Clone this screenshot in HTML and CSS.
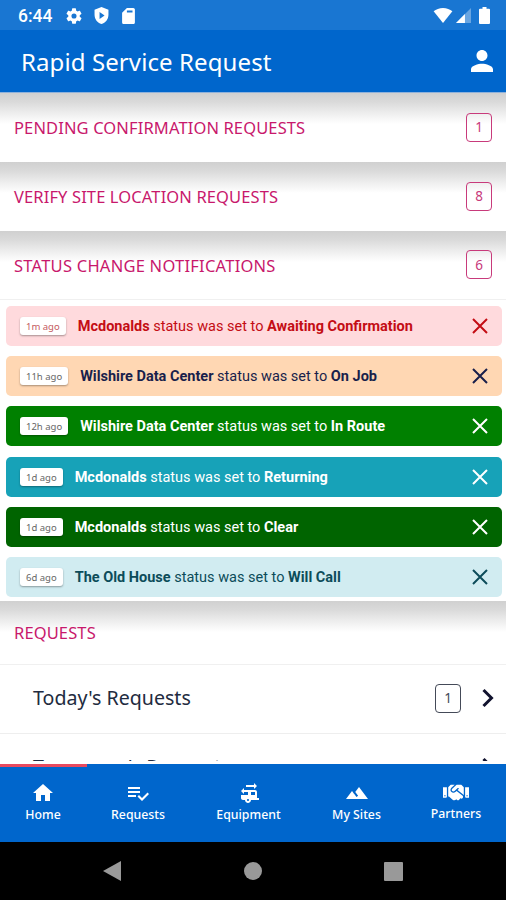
FILE: index.html
```html
<!DOCTYPE html>
<html lang="en">
<head>
<meta charset="utf-8">
<title>Rapid Service Request</title>
<link rel="stylesheet" href="styles.css">
</head>
<body>
<div class="phone">
  <div class="status">
    <span class="clock">6:44</span>
    <svg class="gear" viewBox="2 2 20 20"><path d="M19.14 12.94c.04-.3.06-.61.06-.94s-.02-.64-.07-.94l2.03-1.58a.49.49 0 0 0 .12-.61l-1.92-3.32a.49.49 0 0 0-.59-.22l-2.39.96a7 7 0 0 0-1.62-.94l-.36-2.54a.48.48 0 0 0-.48-.41h-3.84a.48.48 0 0 0-.47.41l-.36 2.54a7 7 0 0 0-1.62.94l-2.39-.96a.48.48 0 0 0-.59.22L2.74 8.87a.48.48 0 0 0 .12.61l2.03 1.58a6 6 0 0 0 0 1.88l-2.03 1.58a.49.49 0 0 0-.12.61l1.92 3.32c.12.22.37.29.59.22l2.39-.96c.5.38 1.03.7 1.62.94l.36 2.54c.05.24.24.41.48.41h3.84c.24 0 .44-.17.47-.41l.36-2.54a7 7 0 0 0 1.62-.94l2.39.96c.22.08.47 0 .59-.22l1.92-3.32a.48.48 0 0 0-.12-.61zM12 15.2a3.200 3.200 0 1 1 0-6.400 3.200 3.200 0 0 1 0 6.400z"/></svg>
    <svg class="shield" viewBox="3 1 18 22"><path fill-rule="evenodd" d="M12 1 3 4.500V11c0 5.600 3.800 10.700 9 12 5.200-1.300 9-6.400 9-12V4.500zM9.500 7.500v9l6.500-4.500z"/></svg>
    <svg class="card" viewBox="4 2 16 20"><path fill-rule="evenodd" d="M18 2h-8L4 8v12c0 1.100.900 2 2 2h12c1.100 0 2-.900 2-2V4c0-1.100-.900-2-2-2zM10 5h7v2.500h-7z"/></svg>
    <svg class="wifi" viewBox="0 0 20 16"><path d="M10 16 0 3.500C2.500 1.500 6 0 10 0s7.500 1.500 10 3.500z"/></svg>
    <svg class="signal" viewBox="0 0 16 16"><path opacity=".35" d="M0 16 16 0v16z"/><path d="M0 16 9.500 6.500V16z"/></svg>
    <svg class="battery" viewBox="0 0 11 17"><path d="M3.500 0h4v1.700H10a1 1 0 0 1 1 1V16a1 1 0 0 1-1 1H1a1 1 0 0 1-1-1V2.700a1 1 0 0 1 1-1h2.500z"/></svg>
  </div>
  <header class="appbar">
    <h1><span>Rapid Service Request</span></h1>
    <svg class="person" viewBox="4 4 16 16"><path d="M12 12c2.210 0 4-1.790 4-4s-1.790-4-4-4-4 1.790-4 4 1.790 4 4 4zm0 2c-2.670 0-8 1.340-8 4v2h16v-2c0-2.660-5.330-4-8-4z"/></svg>
  </header>
  <main class="content">
    <section class="head"><h2>PENDING CONFIRMATION REQUESTS</h2><span class="count">1</span></section>
    <section class="head"><h2>VERIFY SITE LOCATION REQUESTS</h2><span class="count">8</span></section>
    <section class="head ruled"><h2 class="wide">STATUS CHANGE NOTIFICATIONS</h2><span class="count">6</span></section>
    <div class="alerts">
      <div class="alert danger"><span class="ago">1m ago</span><p><b>Mcdonalds</b> status was set to <b>Awaiting Confirmation</b></p><svg class="x" viewBox="0 0 16 16"><path d="m1 1 14 14M15 1 1 15"/></svg></div>
      <div class="alert peach"><span class="ago">11h ago</span><p><b>Wilshire Data Center</b> status was set to <b>On Job</b></p><svg class="x" viewBox="0 0 16 16"><path d="m1 1 14 14M15 1 1 15"/></svg></div>
      <div class="alert green"><span class="ago">12h ago</span><p><b>Wilshire Data Center</b> status was set to <b>In Route</b></p><svg class="x" viewBox="0 0 16 16"><path d="m1 1 14 14M15 1 1 15"/></svg></div>
      <div class="alert teal"><span class="ago">1d ago</span><p><b>Mcdonalds</b> status was set to <b>Returning</b></p><svg class="x" viewBox="0 0 16 16"><path d="m1 1 14 14M15 1 1 15"/></svg></div>
      <div class="alert forest"><span class="ago">1d ago</span><p><b>Mcdonalds</b> status was set to <b>Clear</b></p><svg class="x" viewBox="0 0 16 16"><path d="m1 1 14 14M15 1 1 15"/></svg></div>
      <div class="alert info"><span class="ago">6d ago</span><p><b>The Old House</b> status was set to <b>Will Call</b></p><svg class="x" viewBox="0 0 16 16"><path d="m1 1 14 14M15 1 1 15"/></svg></div>
    </div>
    <section class="head short ruled"><h2>REQUESTS</h2></section>
    <div class="row"><span class="label">Today's Requests</span><span class="count dark">1</span><svg class="chev" viewBox="0 0 12 20"><path d="m2 2 8 8-8 8"/></svg></div>
    <div class="row"><span class="label">Tomorrow's Requests</span><svg class="chev" viewBox="0 0 12 20"><path d="m2 2 8 8-8 8"/></svg></div>
  </main>
  <div class="indicator"><i></i></div>
  <nav class="tabs">
    <a class="w1"><svg viewBox="0 0 24 24"><path d="M10 20v-6h4v6h5v-8h3L12 3 2 12h3v8z"/></svg>Home</a>
    <a class="w2"><svg viewBox="0 0 24 24"><path d="M14 10H2v2h12v-2zm0-4H2v2h12V6zM2 16h8v-2H2v2zm19.500-4.500L23 13l-6.990 7-4.510-4.500L13 14l3.010 3 5.490-5.500z"/></svg>Requests</a>
    <a class="w3"><svg viewBox="0 0 24 24"><path d="M20 17v-6c0-1.100-.900-2-2-2H7V7l-3 3 3 3v-2h4v3H4v3c0 1.100.900 2 2 2h2c0 1.660 1.340 3 3 3s3-1.340 3-3h8v-2h-2zm-9 3c-.550 0-1-.450-1-1s.450-1 1-1 1 .450 1 1-.450 1-1 1zm7-6h-4v-3h4v3zM17 2v2H9v2h8v2l3-3-3-3z"/></svg>Equipment</a>
    <a class="w4"><svg viewBox="0 0 24 24"><path d="m14 6-3.750 5 2.850 3.800-1.600 1.200C9.810 13.750 7 10 7 10l-6 8h22L14 6z"/></svg>My Sites</a>
    <a class="w5"><svg viewBox="0 0 640 512"><path d="M434.700 64h-85.900c-8 0-15.700 3-21.600 8.400l-98.300 90c-.100.100-.200.300-.300.400-16.600 15.600-16.300 40.500-2.100 56 12.700 13.900 39.400 17.600 56.100 2.700.100-.100.300-.100.400-.200l79.900-73.200c6.500-5.900 16.700-5.500 22.600 1 6 6.500 5.500 16.600-1 22.600l-26.100 23.900L504 313.800c2.900 2.400 5.500 5 7.900 7.700V128l-54.600-54.600c-5.900-6-14.100-9.400-22.600-9.400zM544 128.200v223.900c0 17.700 14.300 32 32 32h64V128.200h-96zm48 223.900c-8.800 0-16-7.200-16-16s7.200-16 16-16 16 7.200 16 16-7.200 16-16 16zM0 384h64c17.700 0 32-14.300 32-32V128.200H0V384zm48-63.900c8.800 0 16 7.200 16 16s-7.200 16-16 16-16-7.200-16-16c0-8.900 7.200-16 16-16zm435.900 18.600L334.600 217.500l-30 27.500c-29.700 27.100-75.200 24.500-101.700-4.400-26.900-29.400-24.800-74.900 4.400-101.700L289.100 64h-83.800c-8.500 0-16.600 3.400-22.600 9.400L128 128v223.900h18.300l90.500 81.900c27.400 22.300 67.700 18.100 90-9.300l.200-.200 17.900 15.500c15.900 13 39.400 10.500 52.300-5.400l31.400-38.600 5.400 4.400c13.700 11.100 33.900 9.100 45-4.700l9.500-11.700c11.200-13.800 9.100-33.900-4.600-45.100z"/></svg>Partners</a>
  </nav>
  <div class="sysnav">
    <svg class="back" viewBox="0 0 18 20"><path d="M18 0v20L0 10z"/></svg>
    <svg class="home" viewBox="0 0 18 18"><circle cx="9" cy="9" r="9"/></svg>
    <svg class="recent" viewBox="0 0 19 19"><rect width="19" height="19" rx="1"/></svg>
  </div>
</div>
</body>
</html>
```
FILE: styles.css
```css
* { box-sizing: border-box; }
body { margin: 0; background: #000; font-family: "Noto Sans", sans-serif; }
h1, h2, p { margin: 0; font-weight: 400; }
svg { display: block; flex: none; fill: #fff; }
.phone { width: 506px; height: 900px; display: flex; flex-direction: column; overflow: hidden; background: #fff; }

.status { height: 30px; flex: none; display: flex; align-items: center; background: #1976d2; padding: 1px 16px 0 18px; color: #fff; }
.clock { width: 34px; font: 500 17.500px/20px Roboto, sans-serif; }
.gear { width: 16px; height: 16px; margin-left: 14px; }
.shield { width: 15px; height: 17px; margin-left: 12px; }
.card { width: 13px; height: 16px; margin-left: 13px; }
.wifi { width: 20px; height: 15px; margin-left: auto; }
.signal { width: 15px; height: 15px; margin-left: 3px; }
.battery { width: 11px; height: 17px; margin-left: 8px; }

.appbar { height: 62px; flex: none; display: flex; align-items: center; justify-content: space-between; background: #0066cc; padding: 2px 13px 0 21px; color: #fff; }
h1 { font-size: 24px; line-height: 32px; letter-spacing: .1px; white-space: nowrap; }
.person { width: 22px; height: 22px; margin-top: -3px; }

.content { height: 669px; flex: none; overflow: hidden; }
.head { height: 69px; display: flex; align-items: center; justify-content: space-between; padding: 0 14px; background: linear-gradient(#d0d0d0 0, #dadada 9px, #efefef 21px, #fff 31px); color: #c8186c; }
.head:first-child { height: 70px; border-top: 1px solid #8fb2db; }
.ruled { border-bottom: 1px solid #f0f0f0; }
.short { height: 64px; }
h2 { font-size: 16.500px; line-height: 24px; letter-spacing: .120px; white-space: nowrap; }
.wide { letter-spacing: .240px; padding-top: 1px; }
.count { width: 26px; height: 29px; border: 1.500px solid currentColor; border-radius: 4px; display: flex; align-items: center; justify-content: center; font-size: 13.500px; line-height: 20px; }
.head .count { margin-top: -1px; color: #c83a7b; }

.alerts { height: 301px; padding: 6px 4px 4px 6px; display: flex; flex-direction: column; justify-content: space-between; background: #fff; }
.alert { height: 40px; border-radius: 5px; display: flex; align-items: center; padding: 0 14px; font: 14.500px/20px Roboto, sans-serif; }
.ago { height: 18px; padding: 0 6px; border-radius: 3px; background: #fff; color: #666; font: 9.500px/19px "Noto Sans", sans-serif; box-shadow: 0 1px 2px rgba(0, 0, 0, .35); white-space: nowrap; }
.alert p { flex: 1; margin-left: 12px; padding-top: 2px; white-space: nowrap; }
.alert b { font-weight: 700; }
.x { width: 16px; height: 16px; fill: none; stroke: currentColor; stroke-width: 2; }
.danger { background: #ffdadd; color: #c40d14; }
.danger .ago { color: #c45a60; }
.peach { background: #ffd7b3; color: #191f4b; }
.green { background: #008000; color: #fff; }
.teal { background: #17a2b8; color: #fff; }
.forest { background: #006400; color: #fff; }
.info { background: #d1ecf1; color: #0c4c5a; }

.row { height: 69px; display: flex; align-items: center; border-bottom: 1px solid #eee; padding: 0 12px 2px 33px; color: #222b40; }
.label { flex: 1; font-size: 19.600px; line-height: 28px; }
.dark { color: #444a58; }
.chev { width: 13px; height: 20px; margin-left: 20px; fill: none; stroke: #11122e; stroke-width: 3; }

.indicator { height: 6px; flex: none; padding-top: 3px; background: linear-gradient(#fff 3px, #0066cc 3px); }
.indicator i { display: block; width: 87px; height: 3px; background: #e84a5f; }
.tabs { height: 75px; flex: none; display: flex; background: #0066cc; color: #fff; font-size: 12.300px; font-weight: 500; line-height: 17px; }
.tabs a { display: flex; flex-direction: column; align-items: center; padding-top: 14px; gap: 1px; }
.tabs svg { width: 24px; height: 24px; }
.w1 { width: 86px; }
.w2 { width: 104px; }
.w3 { width: 117px; }
.w4 { width: 99px; }
.w5 { width: 100px; }
.tabs .w5 svg { width: 26px; height: 23px; }
.sysnav { height: 58px; flex: none; display: flex; align-items: center; background: #000; }
.sysnav svg { fill: #999; }
.back { width: 18px; height: 20px; margin-left: 103px; }
.home { width: 18px; height: 18px; margin-left: 123px; }
.recent { width: 19px; height: 19px; margin-left: 122px; }
```
